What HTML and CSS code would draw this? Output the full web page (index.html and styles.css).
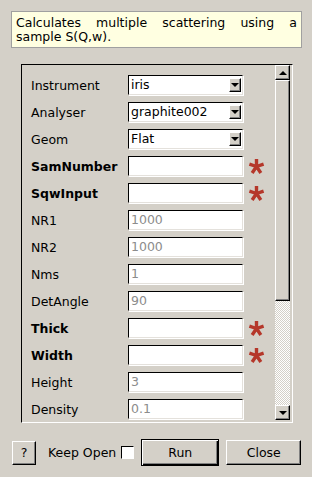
FILE: index.html
```html
<!DOCTYPE html>
<html lang="en">
<head>
  <meta charset="UTF-8" />
  <title>Algorithm Dialog</title>
  <link rel="stylesheet" href="styles.css">
</head>
<body>

  <div class="descricao">Calculates multiple scattering using a sample S(Q,w).</div>

  <div class="painel">
    <div class="campos">
      <div class="linha">
        <label>Instrument</label>
        <div class="combo"><span>iris</span><i class="seta"></i></div>
      </div>
      <div class="linha">
        <label>Analyser</label>
        <div class="combo"><span>graphite002</span><i class="seta"></i></div>
      </div>
      <div class="linha">
        <label>Geom</label>
        <div class="combo"><span>Flat</span><i class="seta"></i></div>
      </div>
      <div class="linha">
        <label class="obrig">SamNumber</label>
        <div class="campo"></div>
        <svg class="ast" viewBox="0 0 16 16"><path d="M8 1V8M8 8L1.3 5.8M8 8l6.7-2.2M8 8l-4.1 6.1M8 8l4.1 6.1"/></svg>
      </div>
      <div class="linha">
        <label class="obrig">SqwInput</label>
        <div class="campo"></div>
        <svg class="ast" viewBox="0 0 16 16"><path d="M8 1V8M8 8L1.3 5.8M8 8l6.7-2.2M8 8l-4.1 6.1M8 8l4.1 6.1"/></svg>
      </div>
      <div class="linha">
        <label>NR1</label>
        <div class="campo dica">1000</div>
      </div>
      <div class="linha">
        <label>NR2</label>
        <div class="campo dica">1000</div>
      </div>
      <div class="linha">
        <label>Nms</label>
        <div class="campo dica">1</div>
      </div>
      <div class="linha">
        <label>DetAngle</label>
        <div class="campo dica">90</div>
      </div>
      <div class="linha">
        <label class="obrig">Thick</label>
        <div class="campo"></div>
        <svg class="ast" viewBox="0 0 16 16"><path d="M8 1V8M8 8L1.3 5.8M8 8l6.7-2.2M8 8l-4.1 6.1M8 8l4.1 6.1"/></svg>
      </div>
      <div class="linha">
        <label class="obrig">Width</label>
        <div class="campo"></div>
        <svg class="ast" viewBox="0 0 16 16"><path d="M8 1V8M8 8L1.3 5.8M8 8l6.7-2.2M8 8l-4.1 6.1M8 8l4.1 6.1"/></svg>
      </div>
      <div class="linha">
        <label>Height</label>
        <div class="campo dica">3</div>
      </div>
      <div class="linha">
        <label>Density</label>
        <div class="campo dica">0.1</div>
      </div>
    </div>

    <div class="rolagem">
      <div class="sb-btn"><i class="tri-cima"></i></div>
      <div class="sb-thumb"></div>
      <div class="sb-trilho"></div>
      <div class="sb-btn"><i class="tri-baixo"></i></div>
    </div>
  </div>

  <div class="rodape">
    <button class="btn btn-ajuda">?</button>
    <span class="manter">Keep Open</span>
    <span class="check"></span>
    <button class="btn btn-run">Run</button>
    <button class="btn btn-close">Close</button>
  </div>

</body>
</html>
```

FILE: styles.css
```css
body {
  margin: 0;
  background: #d4d0c8;
  font-family: 'DejaVu Sans', sans-serif;
  font-size: 12.5px;
  color: #000;
  width: 312px;
  height: 477px;
  overflow: hidden;
}

.descricao {
  margin: 11px 0 0 11px;
  width: 281px;
  height: 29px;
  padding: 4px 4px 2px 4px;
  background: #ffffe1;
  border: 1px solid #a0a0a0;
  text-align: justify;
  line-height: 14px;
}

.painel {
  display: flex;
  margin: 16px 0 0 21px;
  width: 269px;
  height: 357px;
  border-top: 1px solid #000;
  border-left: 1px solid #000;
  border-right: 1px solid #fff;
  border-bottom: 1px solid #fff;
  padding-right: 1px;
}

.campos {
  width: 253px;
  padding-top: 10px;
  overflow: hidden;
}

.linha {
  display: flex;
  align-items: center;
  height: 20px;
  margin-bottom: 7px;
  padding-left: 9px;
}

.linha label {
  width: 97px;
}

.obrig {
  font-weight: bold;
}

.combo, .campo {
  box-sizing: border-box;
  width: 115px;
  height: 20px;
  background: #fff;
  border-top: 1px solid #000;
  border-left: 1px solid #000;
  border-right: 1px solid #e4e1dc;
  border-bottom: 1px solid #e4e1dc;
  box-shadow: 1px 1px 0 #fff;
  padding-left: 2px;
  line-height: 18px;
}

.combo {
  display: flex;
  justify-content: space-between;
  align-items: center;
  padding-right: 1px;
}

.seta {
  position: relative;
  box-sizing: border-box;
  width: 12px;
  height: 14px;
  background: #d4d0c8;
  border-top: 1px solid #fff;
  border-left: 1px solid #fff;
  border-right: 1px solid #000;
  border-bottom: 1px solid #000;
  box-shadow: inset -1px -1px 0 #808080;
}

.seta::after {
  content: '';
  position: absolute;
  left: 1px;
  top: 4px;
  border-left: 4px solid transparent;
  border-right: 4px solid transparent;
  border-top: 4px solid #000;
}

.dica {
  color: #8c8c8c;
}

.ast {
  width: 17px;
  height: 17px;
  margin-left: 5px;
  fill: none;
  stroke: #b5372a;
  stroke-width: 3.2;
  stroke-linecap: butt;
}

.rolagem {
  display: flex;
  flex-direction: column;
  width: 15px;
  padding-bottom: 2px;
}

.sb-btn, .sb-thumb {
  box-sizing: border-box;
  background: #d4d0c8;
  border-top: 1px solid #fff;
  border-left: 1px solid #fff;
  border-right: 1px solid #000;
  border-bottom: 1px solid #000;
  box-shadow: inset -1px -1px 0 #808080;
}

.sb-btn {
  height: 15px;
  display: flex;
  align-items: center;
  justify-content: center;
}

.sb-thumb {
  height: 221px;
}

.sb-trilho {
  flex: 1;
  background: repeating-conic-gradient(#fff 0 25%, #d4d0c8 0 50%) 0 0 / 2px 2px;
}

.tri-cima {
  border-left: 4px solid transparent;
  border-right: 4px solid transparent;
  border-bottom: 4px solid #000;
}

.tri-baixo {
  border-left: 4px solid transparent;
  border-right: 4px solid transparent;
  border-top: 4px solid #000;
}

.rodape {
  display: flex;
  align-items: center;
  margin-top: 16px;
  padding-left: 12px;
}

.btn {
  box-sizing: border-box;
  font-family: 'DejaVu Sans', sans-serif;
  font-size: 12.5px;
  color: #000;
  background: #d4d0c8;
  border-top: 1px solid #fff;
  border-left: 1px solid #fff;
  border-right: 1px solid #000;
  border-bottom: 1px solid #000;
  box-shadow: inset -1px -1px 0 #808080;
  padding: 0;
  height: 25px;
}

.btn-ajuda {
  width: 24px;
  height: 24px;
}

.manter {
  margin-left: 12px;
}

.check {
  box-sizing: border-box;
  width: 13px;
  height: 13px;
  margin-left: 5px;
  background: #fff;
  border-top: 1px solid #000;
  border-left: 1px solid #000;
  border-right: 1px solid #fff;
  border-bottom: 1px solid #fff;
}

.btn-run {
  width: 78px;
  height: 27px;
  margin-left: 7px;
  border: 1px solid #000;
  box-shadow: inset 1px 1px 0 #fff, inset -1px -1px 0 #000, inset -2px -2px 0 #808080;
}

.btn-close {
  width: 75px;
  margin-left: 7px;
}
```
